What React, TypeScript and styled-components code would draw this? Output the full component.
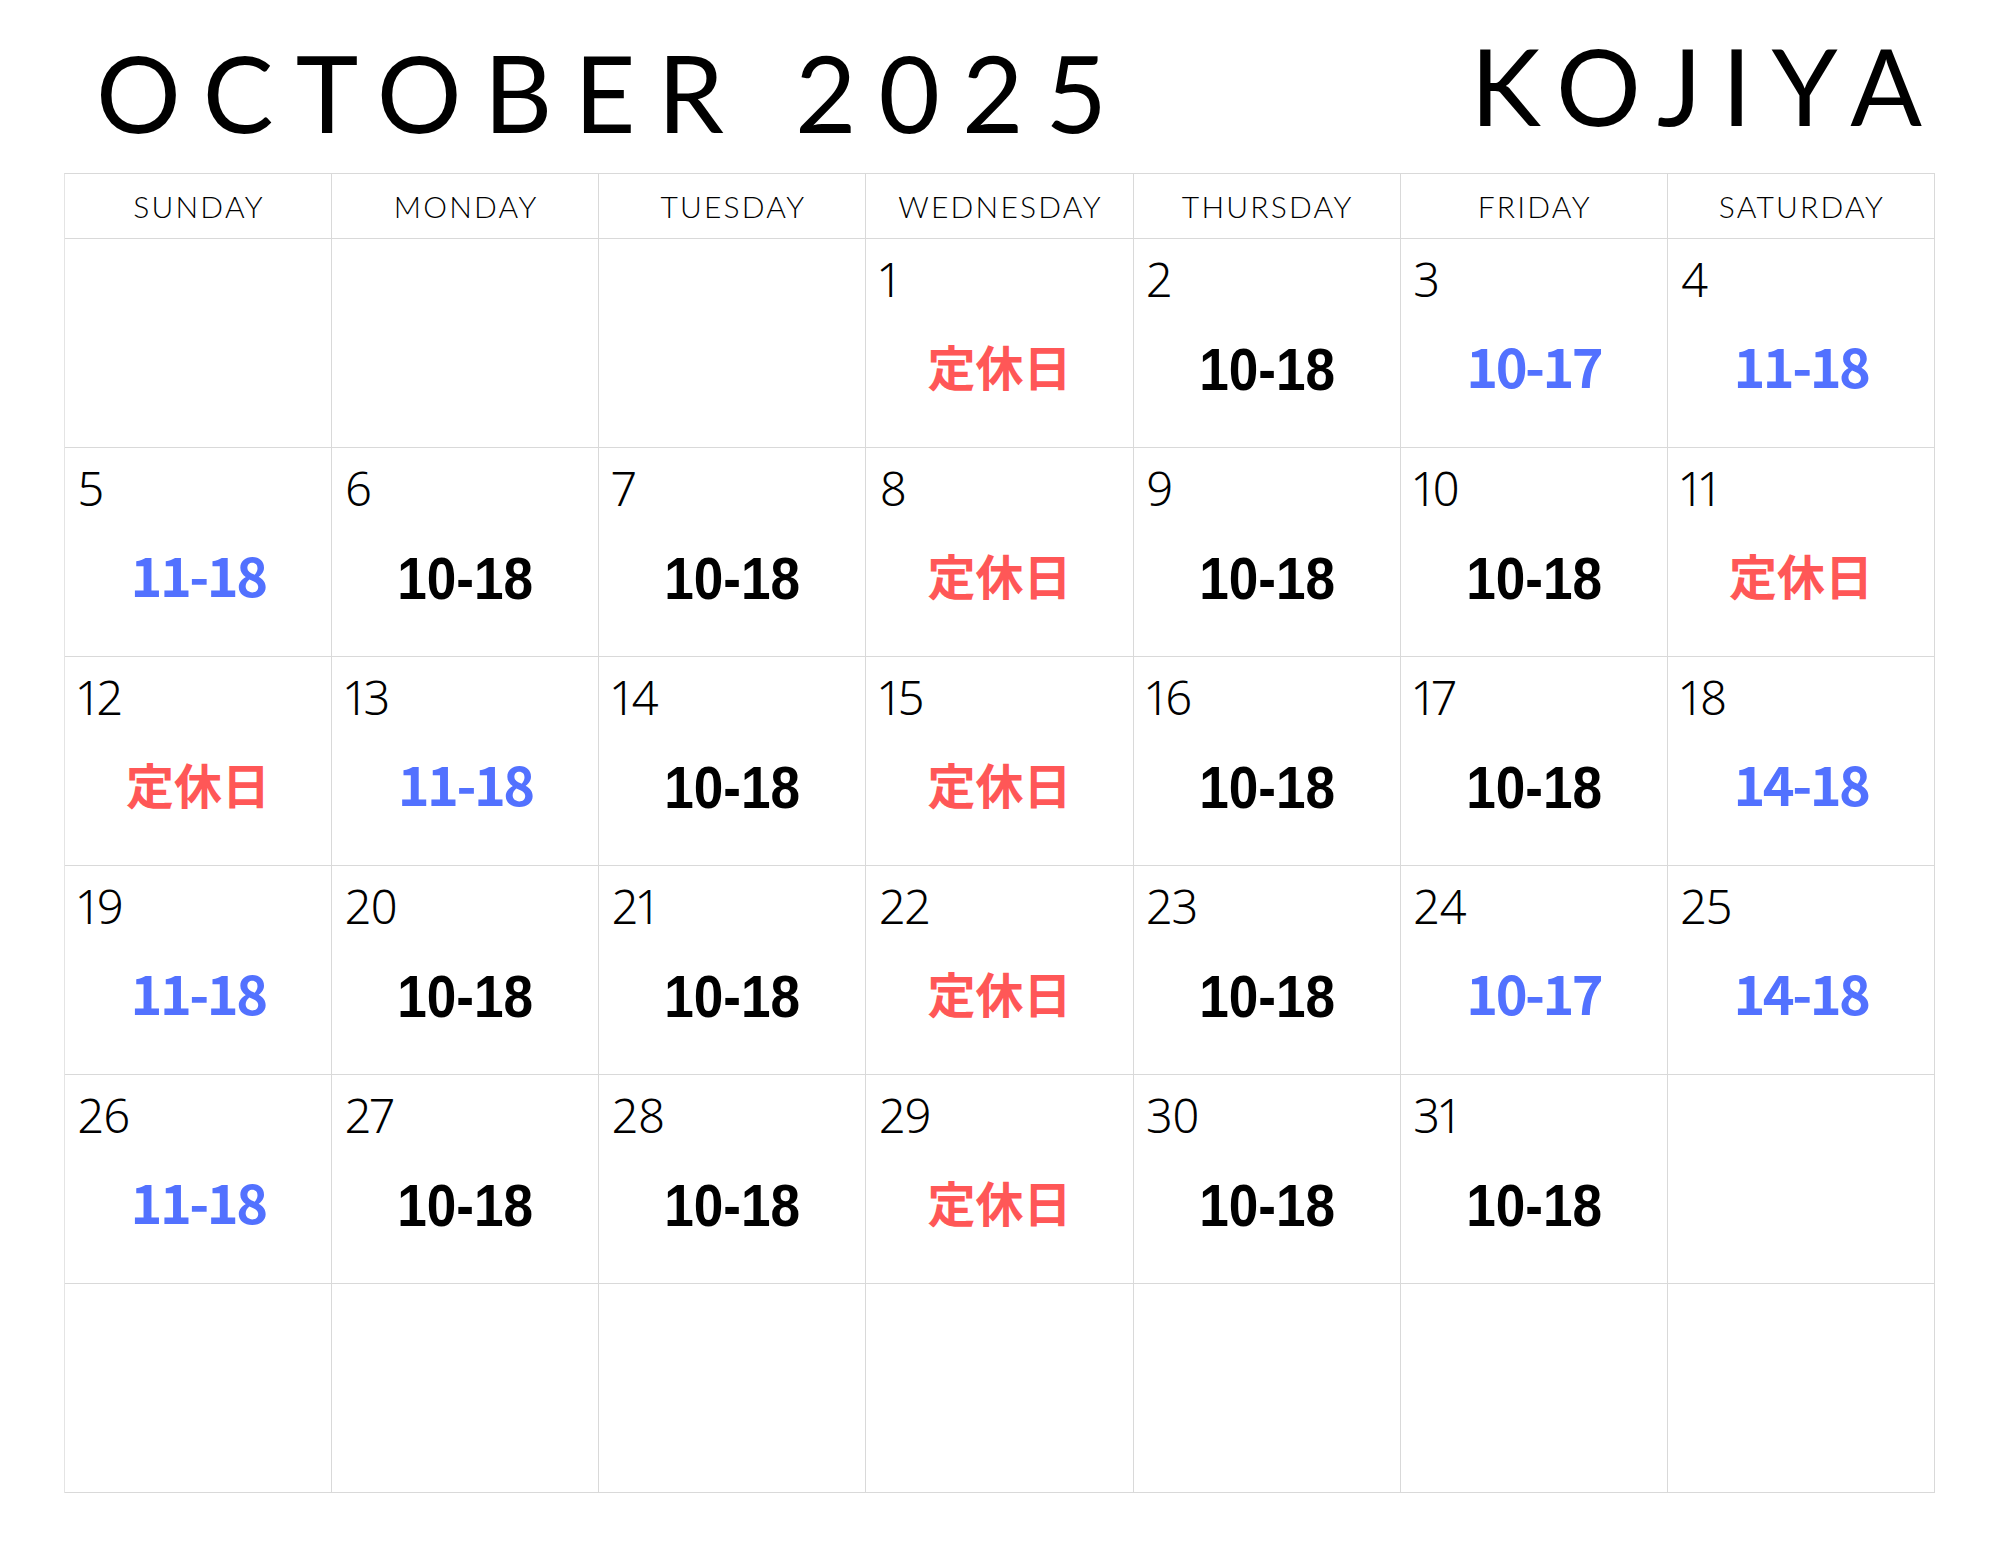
import React from "react";
import styled, { createGlobalStyle } from "styled-components";

const Global = createGlobalStyle`
  html, body { margin: 0; padding: 0; background: #ffffff; }
  body { width: 2000px; height: 1545px; overflow: hidden; }
`;

type Kind = "normal" | "short" | "closed";
type Day = { d: number; t: string; k: Kind } | null;

const Page = styled.div`
  width: 2000px;
  height: 1545px;
  box-sizing: border-box;
  padding: 0 65px 0 64px;
  display: flex;
  flex-direction: column;
  background: #fff;
`;

const Header = styled.header`
  height: 173px;
  display: flex;
  justify-content: space-between;
  align-items: flex-start;
  box-sizing: border-box;
  padding: 0 13px 0 32px;
`;

const Title = styled.h1<{ $top: number; $spacing: number }>`
  margin: ${(p) => p.$top}px ${(p) => -p.$spacing}px 0 0;
  font-family: "Lato", "Noto Sans", sans-serif;
  font-weight: 400;
  font-size: 106px;
  line-height: 106px;
  letter-spacing: ${(p) => p.$spacing}px;
  color: #000;
  white-space: nowrap;
`;

const Grid = styled.div`
  display: grid;
  grid-template-columns: repeat(7, 1fr);
  grid-auto-rows: 209px;
  grid-template-rows: 65px;
  border-top: 1px solid #d9d9d9;
  border-left: 1px solid #e4e4e4;
`;

const HeadCell = styled.div`
  border-right: 1px solid #d9d9d9;
  border-bottom: 1px solid #d9d9d9;
  display: flex;
  align-items: center;
  justify-content: center;
  font-family: "Lato", "Noto Sans", sans-serif;
  font-weight: 300;
  font-size: 30px;
  letter-spacing: 2.2px;
  padding-left: 2px;
  color: #000;
`;

const Cell = styled.div`
  border-right: 1px solid #d9d9d9;
  border-bottom: 1px solid #d9d9d9;
  display: flex;
  flex-direction: column;
  padding-top: 17px;
`;

const Num = styled.div`
  padding-left: 13px;
  font-family: "Noto Sans", "Lato", sans-serif;
  font-weight: 300;
  font-size: 47px;
  line-height: 47px;
  font-variant-numeric: proportional-nums;
  color: #000;
`;

const colors: Record<Kind, string> = {
  normal: "#000000",
  short: "#5271ff",
  closed: "#ff5757",
};

const Hours = styled.div<{ $k: Kind }>`
  margin-top: ${(p) => (p.$k === "normal" ? 38 : 33)}px;
  text-align: center;
  line-height: 58px;
  color: ${(p) => colors[p.$k]};
  font-weight: 700;
  font-family: ${(p) =>
    p.$k === "normal"
      ? `"Liberation Sans", "Noto Sans", sans-serif`
      : `"Noto Sans CJK JP", "Noto Sans", sans-serif`};
  font-size: ${(p) => (p.$k === "normal" ? 59 : p.$k === "short" ? 54 : 48)}px;
  letter-spacing: ${(p) => (p.$k === "short" ? -2.5 : 0)}px;
  transform: scaleX(${(p) => (p.$k === "normal" ? 0.9 : 1)});
`;

const N = (d: number): Day => ({ d, t: "10-18", k: "normal" });
const S = (d: number, t: string): Day => ({ d, t, k: "short" });
const C = (d: number): Day => ({ d, t: "定休日", k: "closed" });

const days: Day[] = [
  null, null, null, C(1), N(2), S(3, "10-17"), S(4, "11-18"),
  S(5, "11-18"), N(6), N(7), C(8), N(9), N(10), C(11),
  C(12), S(13, "11-18"), N(14), C(15), N(16), N(17), S(18, "14-18"),
  S(19, "11-18"), N(20), N(21), C(22), N(23), S(24, "10-17"), S(25, "14-18"),
  S(26, "11-18"), N(27), N(28), C(29), N(30), N(31), null,
  null, null, null, null, null, null, null,
];

const weekdays = ["SUNDAY", "MONDAY", "TUESDAY", "WEDNESDAY", "THURSDAY", "FRIDAY", "SATURDAY"];

export default function App() {
  return (
    <>
      <Global />
      <Page>
        <Header>
          <Title $top={39} $spacing={22}>OCTOBER 2025</Title>
          <Title $top={32} $spacing={20}>KOJIYA</Title>
        </Header>
        <Grid>
          {weekdays.map((w) => (
            <HeadCell key={w}>{w}</HeadCell>
          ))}
          {days.map((day, i) => (
            <Cell key={i}>
              {day && (
                <>
                  <Num>{day.d}</Num>
                  <Hours $k={day.k}>{day.t}</Hours>
                </>
              )}
            </Cell>
          ))}
        </Grid>
      </Page>
    </>
  );
}
